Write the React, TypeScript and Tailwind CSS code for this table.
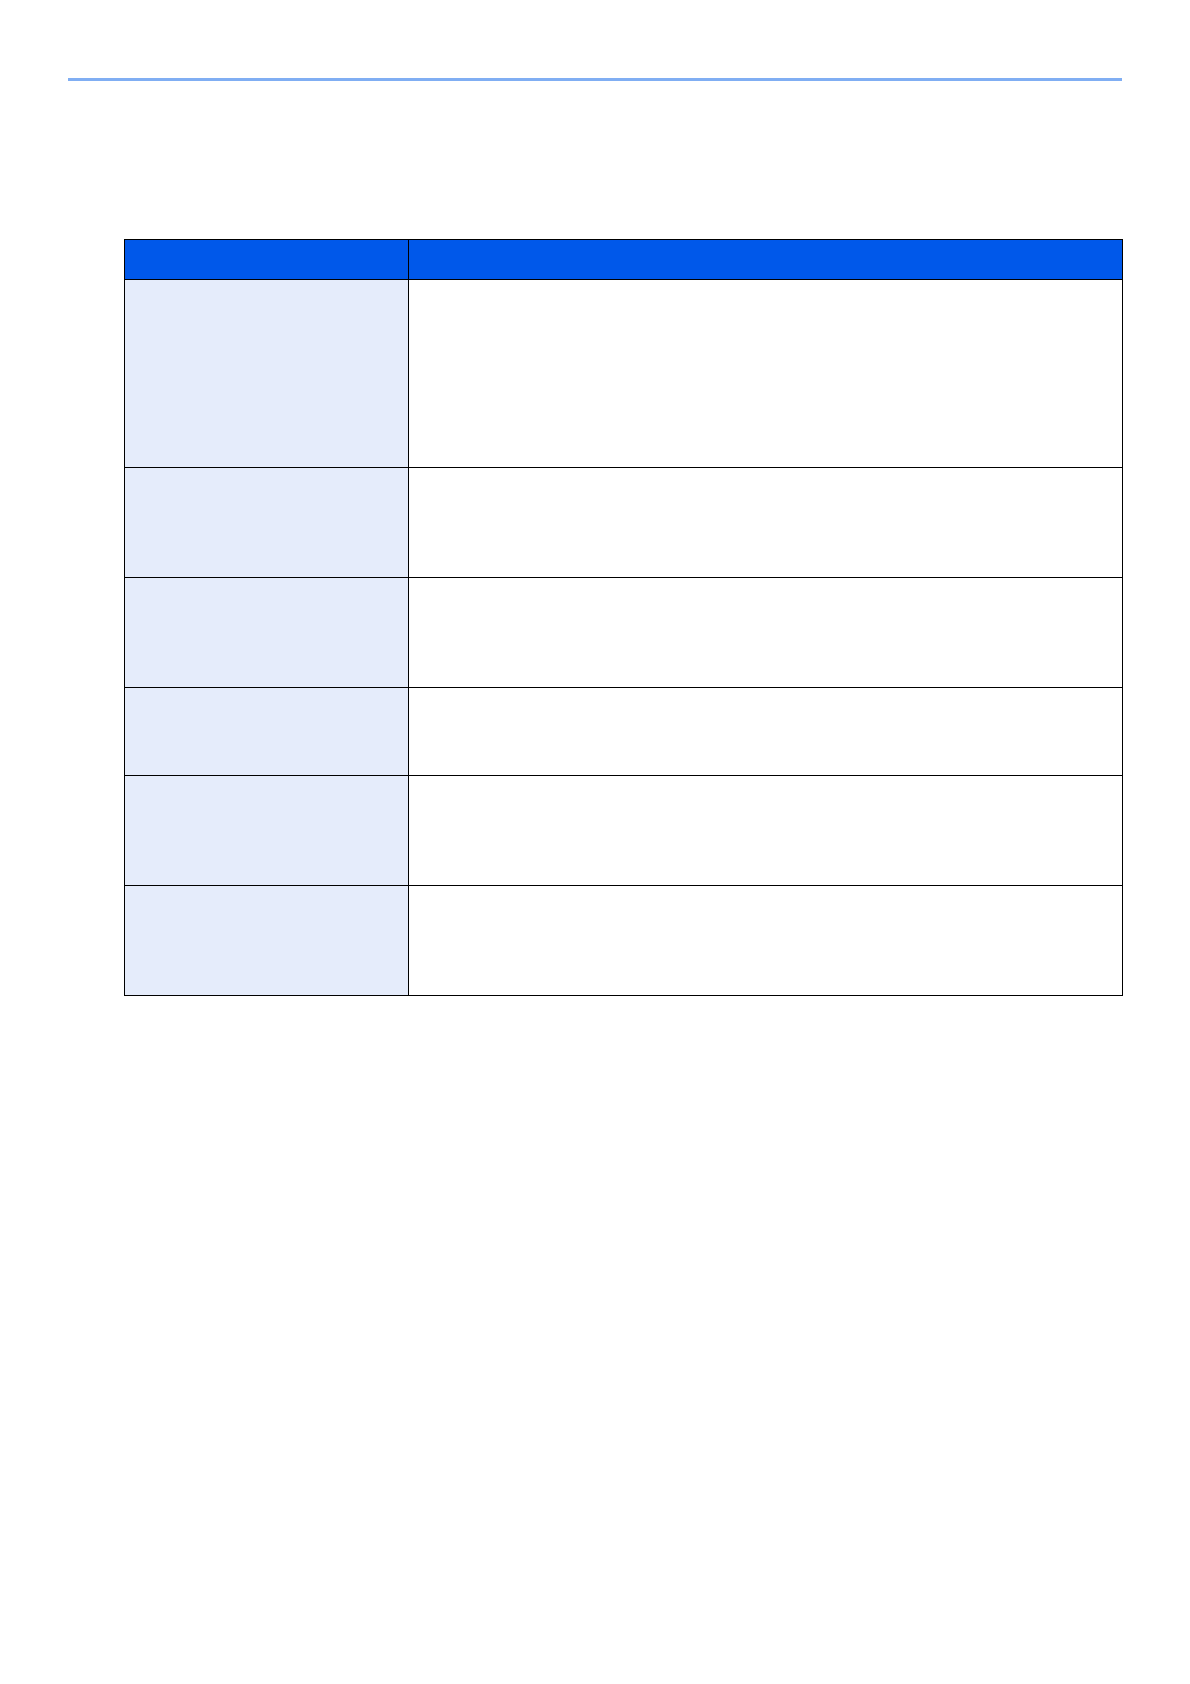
import React from "react";

const rows = [188, 110, 110, 88, 110, 109];

const App: React.FC = () => {
  return (
    <div className="w-[1190px] min-h-[1684px] bg-white pt-[78px]">
      {/* Header rule */}
      <div className="ml-[68px] w-[1054px] h-[3px] bg-[#80aef3]"></div>

      {/* Table */}
      <div className="mt-[158px] ml-[124px] w-[999px] border border-black">
        <div className="flex h-[40px] border-b border-black bg-[#0058ea]">
          <div className="w-[284px] border-r border-black"></div>
          <div className="flex-1"></div>
        </div>
        {rows.map((h, i) => (
          <div
            key={i}
            className={`flex ${i < rows.length - 1 ? "border-b border-black" : ""}`}
            style={{ height: h }}
          >
            <div className="w-[284px] border-r border-black bg-[#e5ecfb]"></div>
            <div className="flex-1 bg-white"></div>
          </div>
        ))}
      </div>
    </div>
  );
};

export default App;
